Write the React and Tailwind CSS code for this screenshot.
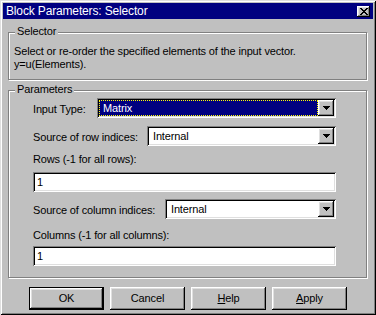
const raised =
  "shadow-[inset_-1px_-1px_0_#000,inset_1px_1px_0_#fff,inset_-2px_-2px_0_#808080,inset_2px_2px_0_#dfdfdf]";
const sunken =
  "shadow-[inset_1px_1px_0_#808080,inset_-1px_-1px_0_#fff,inset_2px_2px_0_#000,inset_-2px_-2px_0_#dfdfdf]";

function Arrow() {
  return (
    <svg width="7" height="4" viewBox="0 0 7 4" shapeRendering="crispEdges">
      <path d="M0 0h7v1H0z M1 1h5v1H1z M2 2h3v1H2z M3 3h1v1H3z" fill="#000" />
    </svg>
  );
}

function Combo({ value, selected }) {
  return (
    <div className={`flex-1 h-[20px] bg-white p-[2px] flex ${sunken}`}>
      {selected ? (
        <div className="flex-1 bg-[#000080] outline-1 outline-dotted outline-[#ffff00] -outline-offset-1 flex items-center pl-[4px] text-white leading-[13px]">
          {value}
        </div>
      ) : (
        <div className="flex-1 flex items-center pl-[4px] leading-[13px]">{value}</div>
      )}
      <div className={`w-[16px] h-[16px] bg-[#c0c0c0] flex items-center justify-center ${raised}`}>
        <Arrow />
      </div>
    </div>
  );
}

function TextBox({ value }) {
  return (
    <div className={`h-[20px] bg-white flex items-center pl-[4px] leading-[13px] ${sunken}`}>{value}</div>
  );
}

function Button({ children, isDefault }) {
  return (
    <div
      className={`w-[75px] h-[23px] flex items-center justify-center ${
        isDefault ? "border border-black" : ""
      }`}
    >
      <div className={`w-full h-full flex items-center justify-center ${raised}`}>
        <span className="leading-[13px]">{children}</span>
      </div>
    </div>
  );
}

export default function App() {
  return (
    <div className="w-[376px] h-[315px] bg-[#c0c0c0] p-[3px] flex flex-col font-['Liberation_Sans',Arial,sans-serif] text-[11px] tracking-[-0.15px] text-black shadow-[inset_1px_1px_0_#dfdfdf,inset_-1px_-1px_0_#000,inset_2px_2px_0_#fff,inset_-2px_-2px_0_#808080]">
      {/* Title bar */}
      <div className="h-[16px] bg-[#000080] flex items-center pl-[3px] pr-[3px]">
        <span className="flex-1 text-white text-[12px] leading-[16px]">Block Parameters: Selector</span>
        <div className={`w-[13px] h-[11px] bg-[#c0c0c0] flex items-center justify-center ${raised}`}>
          <svg width="8" height="7" viewBox="0 0 8 7" shapeRendering="crispEdges">
            <path
              d="M0 0h2v1H0z M6 0h2v1H6z M1 1h2v1H1z M5 1h2v1H5z M2 2h4v1H2z M3 3h2v1H3z M2 4h4v1H2z M1 5h2v1H1z M5 5h2v1H5z M0 6h2v1H0z M6 6h2v1H6z"
              fill="#000"
            />
          </svg>
        </div>
      </div>

      <div className="flex flex-col pl-[5px] pr-[6px]">
        {/* Selector group */}
        <div className="relative mt-[13px] h-[48px] border border-[#808080] shadow-[inset_1px_1px_0_#fff,1px_1px_0_#fff] pl-[5px] pt-[12px]">
          <span className="absolute -top-[8px] left-[6px] px-[2px] bg-[#c0c0c0] leading-[13px]">Selector</span>
          <div className="leading-[13px]">Select or re-order the specified elements of the input vector.</div>
          <div className="leading-[13px]">y=u(Elements).</div>
        </div>

        {/* Parameters group */}
        <div className="relative mt-[10px] border border-[#808080] shadow-[inset_1px_1px_0_#fff,1px_1px_0_#fff] pl-[24px] pr-[30px] pb-[11px] flex flex-col">
          <span className="absolute -top-[8px] left-[6px] px-[2px] bg-[#c0c0c0] leading-[13px]">Parameters</span>

          <div className="mt-[7px] flex items-start">
            <span className="w-[64px] mt-[5px] leading-[13px]">Input Type:</span>
            <Combo value="Matrix" selected />
          </div>

          <div className="mt-[8px] flex items-start">
            <span className="w-[114px] mt-[5px] leading-[13px]">Source of row indices:</span>
            <Combo value="Internal" />
          </div>

          <span className="mt-[7px] leading-[13px]">Rows (-1 for all rows):</span>
          <div className="mt-[6px]">
            <TextBox value="1" />
          </div>

          <div className="mt-[7px] flex items-start">
            <span className="w-[132px] mt-[5px] leading-[13px]">Source of column indices:</span>
            <Combo value="Internal" />
          </div>

          <span className="mt-[10px] leading-[13px]">Columns (-1 for all columns):</span>
          <div className="mt-[4px]">
            <TextBox value="1" />
          </div>
        </div>
      </div>

      {/* Buttons */}
      <div className="mt-[9px] pl-[26px] flex gap-[6px]">
        <Button isDefault>OK</Button>
        <Button>Cancel</Button>
        <Button>
          <span className="underline underline-offset-1">H</span>elp
        </Button>
        <Button>
          <span className="underline underline-offset-1">A</span>pply
        </Button>
      </div>
    </div>
  );
}
